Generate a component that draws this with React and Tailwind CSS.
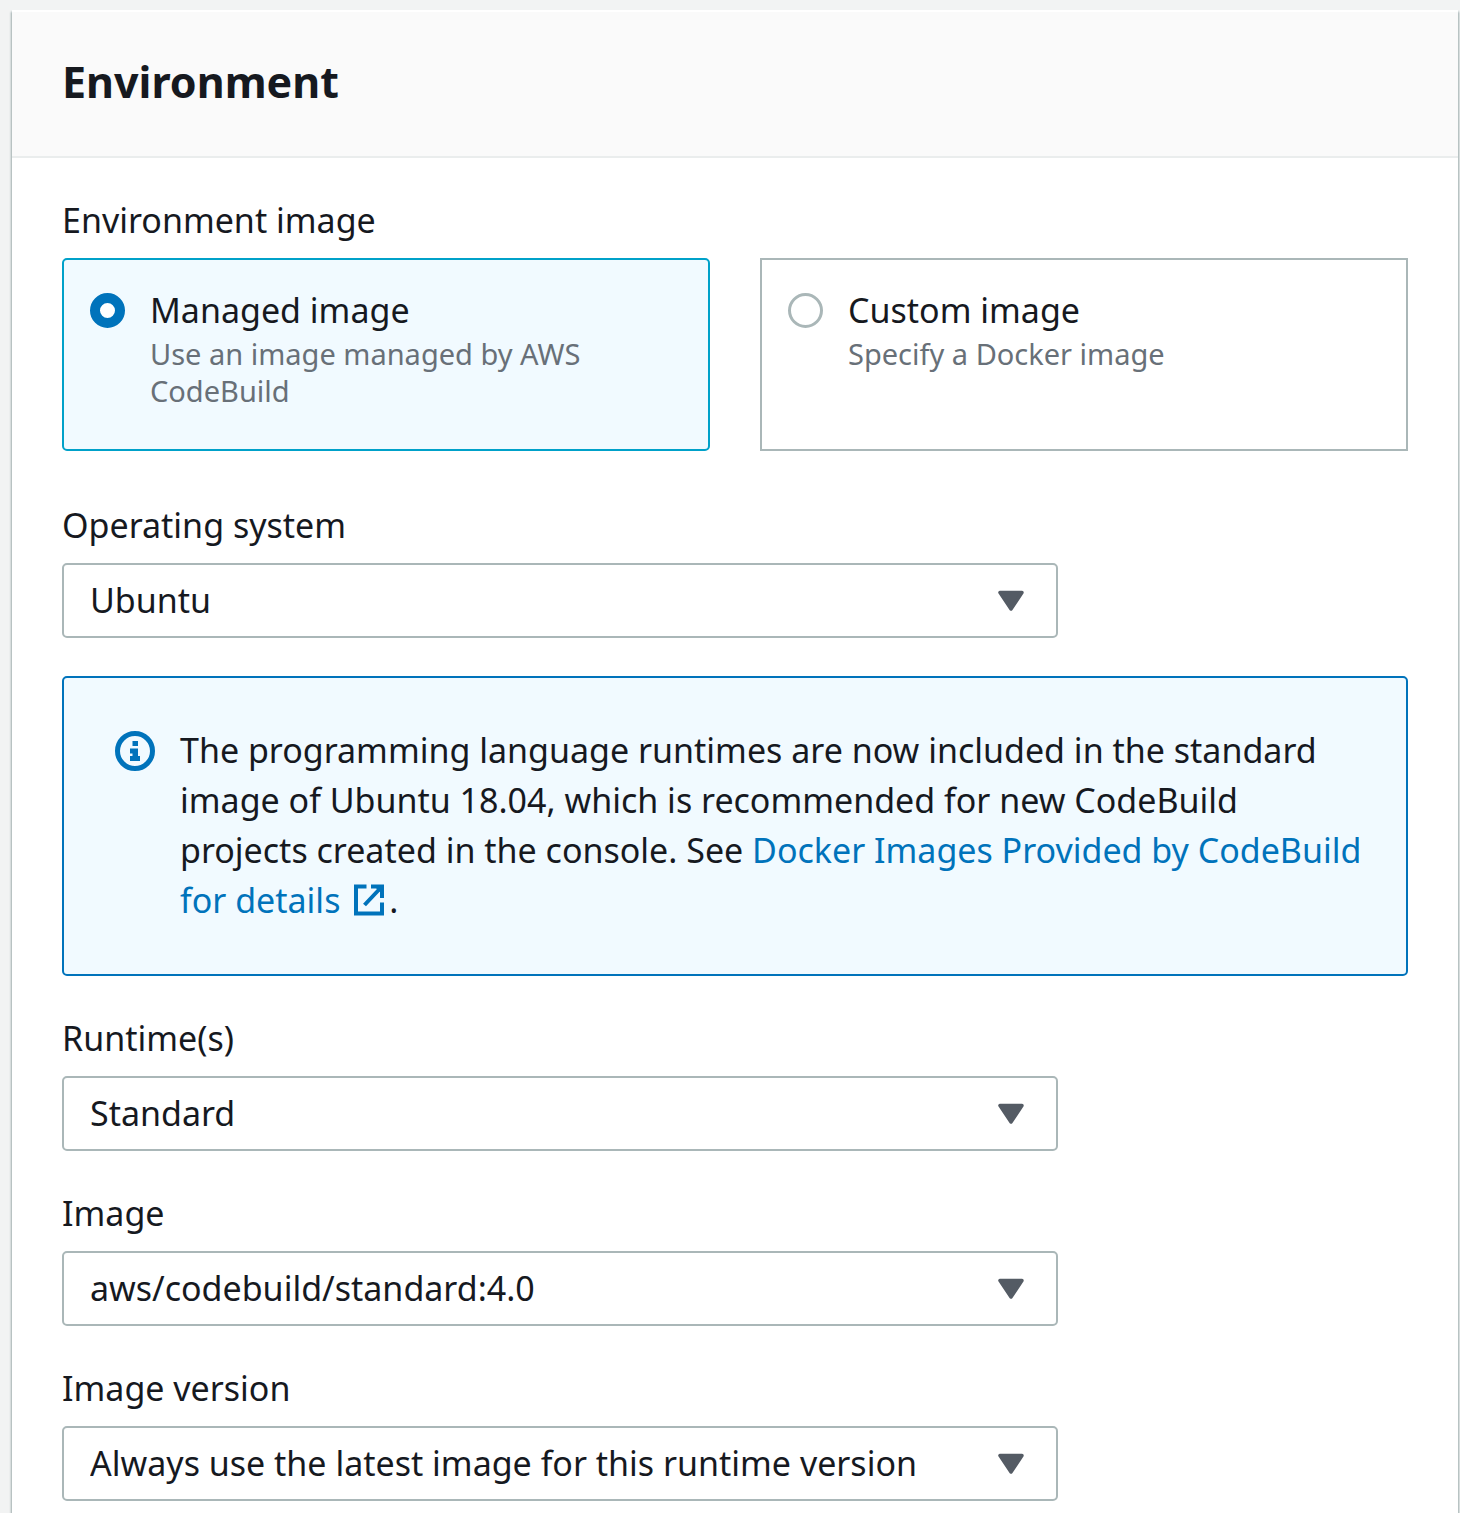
import { useState } from "react";

const fields = {
  os: { label: "Operating system", options: ["Ubuntu", "Amazon Linux 2"] },
  runtime: { label: "Runtime(s)", options: ["Standard"] },
  image: { label: "Image", options: ["aws/codebuild/standard:4.0", "aws/codebuild/standard:3.0"] },
  version: { label: "Image version", options: ["Always use the latest image for this runtime version"] },
};

function SelectField({ id }) {
  const { label, options } = fields[id];
  return (
    <div>
      <label htmlFor={id} className="block leading-[48px]">{label}</label>
      <div className="relative mt-[14px] w-[74%]">
        <select
          id={id}
          className="block h-[75px] w-full appearance-none rounded-[5px] border-2 border-[#aab7b8] bg-white pr-20 pl-[26px]"
        >
          {options.map((o) => (
            <option key={o}>{o}</option>
          ))}
        </select>
        <svg viewBox="0 0 28 22" className="pointer-events-none absolute top-[27px] right-[33px] h-[22px] w-7" aria-hidden="true">
          <path d="M3 2.5H25L14 19Z" fill="#545b64" stroke="#545b64" strokeWidth="3.5" strokeLinejoin="round" />
        </svg>
      </div>
    </div>
  );
}

function Tile({ id, title, description, checked, onChange }) {
  return (
    <label
      htmlFor={id}
      className={
        checked
          ? "flex min-h-[193px] gap-[25px] rounded-[5px] border-2 border-[#00a1c9] bg-[#f1faff] px-[26px] pt-[25px]"
          : "flex min-h-[193px] gap-[25px] border-2 border-[#aab7b8] bg-white px-[26px] pt-[25px]"
      }
    >
      <input
        id={id}
        type="radio"
        name="environment-image"
        checked={checked}
        onChange={onChange}
        className="mt-2 size-[35px] shrink-0 appearance-none rounded-full border-3 border-[#aab7b8] bg-white checked:border-[10px] checked:border-[#0073bb]"
      />
      <span>
        <span className="block leading-[50px]">{title}</span>
        <span className="block text-[29px] leading-[37px] text-[#687078]">{description}</span>
      </span>
    </label>
  );
}

export default function App() {
  const [kind, setKind] = useState("managed");
  return (
    <main className="bg-[#f2f3f3] pt-[10px] pr-[2px] pl-3 font-['Noto_Sans',sans-serif] text-[34px] text-[#16191f]">
      <section className="border-t-2 border-white bg-white shadow-[0_2px_2px_0_#aab7b8,1px_2px_2px_0_#aab7b8,-1px_2px_2px_0_#aab7b8]">
        <header className="border-b-2 border-[#eaeded] bg-[#fafafa] px-[50px] pt-[39px] pb-[43px]">
          <h2 className="text-[43px] leading-[62px] font-bold">Environment</h2>
        </header>
        <form className="px-[50px] pt-[38px] pb-3">
          <fieldset>
            <legend className="leading-[48px]">Environment image</legend>
            <div className="mt-[14px] grid grid-cols-2 gap-[50px]">
              <Tile id="managed" title="Managed image" description="Use an image managed by AWS CodeBuild" checked={kind === "managed"} onChange={() => setKind("managed")} />
              <Tile id="custom" title="Custom image" description="Specify a Docker image" checked={kind === "custom"} onChange={() => setKind("custom")} />
            </div>
          </fieldset>
          <div className="mt-[50px]">
            <SelectField id="os" />
          </div>
          <div className="mt-[38px] flex gap-6 rounded-[5px] border-2 border-[#0073bb] bg-[#f1faff] pt-[47px] pr-10 pb-[49px] pl-[50px]">
            <svg viewBox="0 0 42 42" className="mt-[5px] size-[42px] shrink-0" fill="none" aria-hidden="true">
              <circle cx="21" cy="21" r="17.5" stroke="#0073bb" strokeWidth="5" />
              <path d="M18.5 11h5.5v5h-5.5zM16 18.5h8v7.5h2v5H16v-5h2.500v-2.500H16z" fill="#0073bb" />
            </svg>
            <p className="leading-[50px]">
              The programming language runtimes are now included in the standard image of Ubuntu 18.04, which is recommended for new CodeBuild projects created in the console. See{" "}
              <a href="#docker-images" className="text-[#0073bb]">
                Docker Images Provided by CodeBuild for details{" "}
                <svg viewBox="0 0 32 32" className="mx-1 mb-2 inline size-8" fill="none" stroke="#0073bb" strokeWidth="4" aria-hidden="true">
                  <path d="M13.500 2.500H3V29.500H29V18.500M18 2.500H29V14M28 3.500L11.500 21" />
                  <path d="M22 2.500H29V9.500Z" fill="#0073bb" strokeWidth="1" />
                </svg>
              </a>
              .
            </p>
          </div>
          <div className="mt-[38px] flex flex-col gap-[38px]">
            <SelectField id="runtime" />
            <SelectField id="image" />
            <SelectField id="version" />
          </div>
        </form>
      </section>
    </main>
  );
}
